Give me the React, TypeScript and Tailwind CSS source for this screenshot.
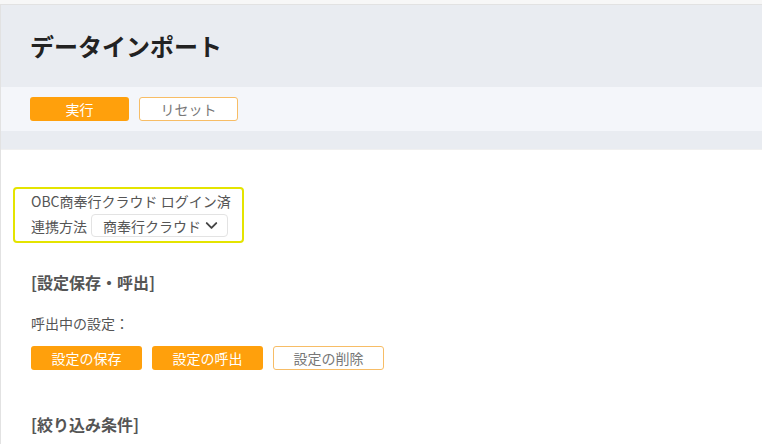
import { ChevronDown } from 'lucide-react';

const font = { fontFamily: '"Noto Sans CJK JP", "Noto Sans", sans-serif' };

export default function App() {
  const solidBtn =
    'flex items-center justify-center h-[24px] rounded-[3px] bg-[#ffa00c] text-white text-[14px] leading-none';
  const outlineBtn =
    'flex items-center justify-center h-[24px] rounded-[3px] bg-white border border-[#f7bd66] text-[#777] text-[14px] leading-none';

  return (
    <div className="w-[762px] h-[444px] overflow-hidden bg-white" style={font}>
      <div className="h-[4px] bg-[#f7f7f7]" />
      <div className="border-t border-l border-[#e2e2e2] h-[440px] flex flex-col">
        {/* Header */}
        <div className="h-[82px] bg-[#e9ecf1] flex items-center pl-[29px]">
          <h1 className="text-[24px] font-bold text-[#222] leading-none">データインポート</h1>
        </div>

        {/* Toolbar */}
        <div className="h-[44px] bg-[#f4f6fa] flex items-center gap-[10px] pl-[29px]">
          <button className={`${solidBtn} w-[99px]`}>実行</button>
          <button className={`${outlineBtn} w-[99px]`}>リセット</button>
        </div>
        <div className="h-[19px] bg-[#e9ecf1] border-b border-[#f0f0f0]" />

        {/* Body */}
        <div className="pl-[12px] pt-[37px]">
          <div className="w-[231px] border-2 border-[#e4e400] rounded-[4px] pl-[16px] pt-[2px] pb-[4px]">
            <div className="h-[20px] flex items-center text-[14px] text-[#555] leading-none">
              OBC商奉行クラウド ログイン済
            </div>
            <div className="mt-[3px] flex items-center gap-[4px]">
              <span className="text-[14px] text-[#555] leading-none">連携方法</span>
              <div className="w-[137px] h-[23px] border border-[#e3e3e3] rounded-[4px] flex items-center justify-between pl-[11px] pr-[6px]">
                <span className="text-[14px] text-[#555] leading-none">商奉行クラウド</span>
                <ChevronDown className="w-[19px] h-[19px] text-[#444]" strokeWidth={2.4} />
              </div>
            </div>
          </div>
        </div>

        <div className="pl-[30px]">
          <h2 className="mt-[29px] text-[16px] font-bold text-[#555] leading-[20px]">[設定保存・呼出]</h2>
          <p className="mt-[21px] text-[14px] text-[#555] leading-[20px]">呼出中の設定：</p>
          <div className="mt-[13px] flex gap-[10px]">
            <button className={`${solidBtn} w-[111px]`}>設定の保存</button>
            <button className={`${solidBtn} w-[111px]`}>設定の呼出</button>
            <button className={`${outlineBtn} w-[111px]`}>設定の削除</button>
          </div>
          <h2 className="mt-[44px] text-[16px] font-bold text-[#555] leading-[20px]">[絞り込み条件]</h2>
        </div>
      </div>
    </div>
  );
}
